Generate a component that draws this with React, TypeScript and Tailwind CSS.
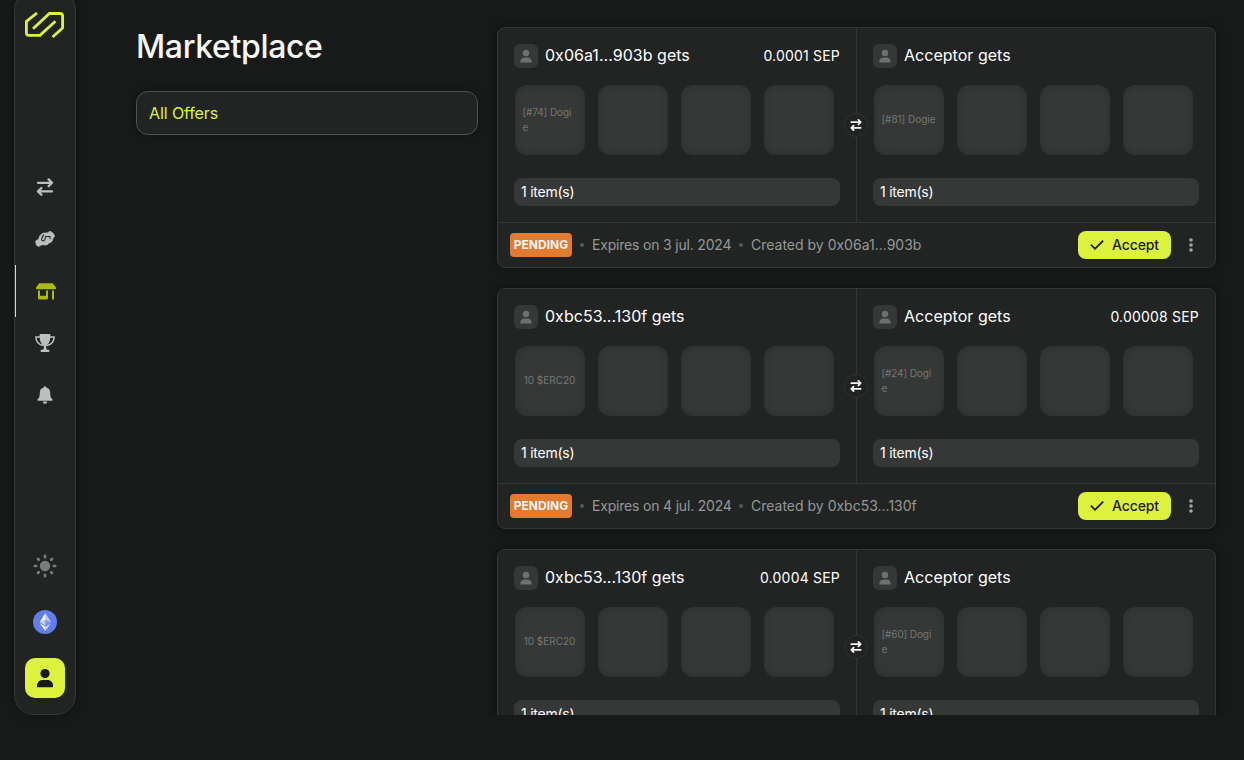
import React from "react";

type Side = { name: string; item: string; sep?: string };
type Offer = { from: Side; to: Side; expires: string; by: string };

const offers: Offer[] = [
  {
    from: { name: "0x06a1...903b gets", item: "[#74] Dogi\ne", sep: "0.0001 SEP" },
    to: { name: "Acceptor gets", item: "[#81] Dogie" },
    expires: "Expires on 3 jul. 2024",
    by: "Created by 0x06a1...903b",
  },
  {
    from: { name: "0xbc53...130f gets", item: "10 $ERC20" },
    to: { name: "Acceptor gets", item: "[#24] Dogi\ne", sep: "0.00008 SEP" },
    expires: "Expires on 4 jul. 2024",
    by: "Created by 0xbc53...130f",
  },
  {
    from: { name: "0xbc53...130f gets", item: "10 $ERC20", sep: "0.0004 SEP" },
    to: { name: "Acceptor gets", item: "[#60] Dogi\ne" },
    expires: "Expires on 4 jul. 2024",
    by: "Created by 0xbc53...130f",
  },
];

function Logo() {
  return (
    <svg width="40" height="26" viewBox="0 0 40 26" fill="none" stroke="#DDF23D" strokeWidth="2.8">
      <path d="M12 1 L1.4 9.5 V21 Q1.4 23.4 4 23.4 H15 L30.4 9.2" />
      <path d="M8 16.8 L24.4 1.5 H35 Q37.6 1.5 37.6 4 V16 L27.6 25" />
    </svg>
  );
}

function Swap({ size, color, weight = 2.3 }: { size: number; color: string; weight?: number }) {
  return (
    <svg width={size} height={size} viewBox="0 0 18 18" fill="none" stroke={color} strokeWidth={weight} strokeLinecap="round" strokeLinejoin="round">
      <path d="M2 4.8H15.8M12.6 1.4L16 4.8L12.6 8.2M16 13.4H2.2M5.4 10L2 13.4L5.4 16.8" />
    </svg>
  );
}

function Person({ size, color }: { size: number; color: string }) {
  return (
    <svg width={size} height={size} viewBox="0 0 20 20" fill={color}>
      <circle cx="10" cy="5.6" r="4.6" />
      <path d="M2 19.3V17.5C2 14 4.8 12 8 12H12C15.2 12 18 14 18 17.5V19.3Z" />
    </svg>
  );
}

function Handshake() {
  return (
    <svg width="20" height="16" viewBox="0 0 20 16">
      <path fill="#BDBFBE" stroke="#BDBFBE" strokeWidth="0.8" strokeLinejoin="round" d="M0.6 10.2L3.8 8C4.4 5.4 5.5 3.2 8 2.2C9.5 1.8 11 2.3 12.6 1.9L13.6 0.9L16 0.5L16.6 1.5L18.4 2.4L19.5 5.4L17.8 7.6C17.5 10.6 16 11.5 14 12C12.5 13.9 11 14.5 8.5 13.7L6.4 13.9L3.6 15.5L1.4 14Z" />
      <path fill="none" stroke="#222423" strokeWidth="1.1" strokeLinecap="round" d="M8.6 3.8C7.3 6 6.4 7.8 6.7 8.8C7.1 10.2 9 10.2 9.8 9L10.5 5.5H15V7.6" />
    </svg>
  );
}

function Store() {
  return (
    <svg width="20" height="17" viewBox="0 0 20 17" fill="#AABB14">
      <path d="M3.2 0.3H16.8L20 4.6V5.2Q20 6.3 18.9 6.3H1.1Q0 6.3 0 5.2V4.6Z" />
      <path d="M2 7.5H4V12.7H10V7.5H12V15Q12 16.5 10.5 16.5H3.5Q2 16.5 2 15ZM16 7.5H18V16.5H16Z" />
    </svg>
  );
}

function Trophy() {
  return (
    <svg width="20" height="18" viewBox="0 0 20 18">
      <path fill="#BDBFBE" d="M5.4 0H14.6Q15.4 0 15.4 0.9C15.4 6 14.6 9.2 11.2 11.6V14C11.2 15 11.7 15.6 12.6 15.8H13.4Q14.5 15.9 14.5 17Q14.5 18 13.4 18H6.6Q5.5 18 5.5 17Q5.5 15.9 6.6 15.8H7.4C8.3 15.6 8.8 15 8.8 14V11.6C5.4 9.2 4.6 6 4.6 0.9Q4.6 0 5.4 0Z" />
      <path fill="none" stroke="#BDBFBE" strokeWidth="1.5" strokeLinecap="round" d="M5 2.9H0.9C1 7.5 3.2 10.4 8 11.4M15 2.9H19.1C19 7.5 16.8 10.4 12 11.4" />
    </svg>
  );
}

function Bell() {
  return (
    <svg width="16" height="18" viewBox="0 0 16 18" fill="#BDBFBE">
      <path d="M8 0.2C8.8 0.2 9.2 0.7 9.2 1.5C11.8 2 13.2 4.2 13.2 6.8C13.2 10.4 13.8 12 15.6 13.6Q16 14.6 15 14.8H1Q0 14.6 0.4 13.6C2.2 12 2.8 10.4 2.8 6.8C2.8 4.2 4.2 2 6.8 1.5C6.8 0.7 7.2 0.2 8 0.2Z" />
      <path d="M5.8 15.4H10.2C10 17 9.2 17.8 8 17.8S6 17 5.8 15.4Z" />
    </svg>
  );
}

function Sun() {
  return (
    <svg width="24" height="24" viewBox="0 0 24 24">
      <circle cx="12" cy="12" r="5.2" fill="#7A7C7B" />
      <path d="M12 1.8V3.2M12 20.8V22.2M1.8 12H3.2M20.8 12H22.2M5 5L5.8 5.8M18.2 18.2L19 19M5 19L5.8 18.2M18.2 5.8L19 5" stroke="#7A7C7B" strokeWidth="2.7" strokeLinecap="round" />
    </svg>
  );
}

function Ethereum() {
  return (
    <svg width="24" height="24" viewBox="0 0 32 32">
      <circle cx="16" cy="16" r="16" fill="#627EEA" />
      <g fill="#fff">
        <path fillOpacity=".6" d="M16.5 4v8.87l7.5 3.35zM16.5 21.97V28L24 17.62z" />
        <path d="M16.5 4L9 16.22l7.5-3.35zM16.5 28v-6.03L9 17.62z" />
        <path fillOpacity=".2" d="M16.5 20.57l7.5-4.35-7.5-3.35z" />
        <path fillOpacity=".6" d="M9 16.22l7.5 4.35v-7.7z" />
      </g>
    </svg>
  );
}

function Slot({ label }: { label?: string }) {
  const twoLines = label?.includes("\n");
  return (
    <div className="flex h-[70px] w-[70px] items-center justify-center rounded-xl bg-[#363837] shadow-[inset_0_0_8px_rgba(0,0,0,0.18)]">
      {label && (
        <span
          className={
            twoLines
              ? "w-[55px] shrink-0 text-[10px] leading-[15px] tracking-[-0.1px] whitespace-pre text-[#737775]"
              : "mr-px mb-0.5 shrink-0 text-[10px] leading-[15px] tracking-[-0.02px] whitespace-pre text-[#737775]"
          }
        >
          {label}
        </span>
      )}
    </div>
  );
}

function OfferSide({ side }: { side: Side }) {
  return (
    <div className="h-full p-4">
      <div className="flex h-6 items-center">
        <div className="flex h-6 w-6 items-center justify-center rounded-md bg-[#363837]">
          <Person size={14} color="#6E716F" />
        </div>
        <span className="mb-0.5 ml-[7px] text-base tracking-[0.03px] whitespace-nowrap text-white">{side.name}</span>
        {side.sep && (
          <span className="ml-auto text-sm tracking-[0.2px] whitespace-nowrap text-white">{side.sep}</span>
        )}
      </div>
      <div className="mt-[17px] flex gap-[13px] pl-px">
        <Slot label={side.item} />
        <Slot />
        <Slot />
        <Slot />
      </div>
      <div className="mt-[23px] flex h-7 items-center rounded-lg bg-[#363837] pl-[7px] text-sm tracking-[-0.25px] text-white">1 item(s)</div>
    </div>
  );
}

function OfferCard({ offer }: { offer: Offer }) {
  return (
    <article className="h-[241px] shrink-0 rounded-lg border border-[#353736] bg-[#222423] shadow-[0_0_10px_rgba(0,0,0,0.4)]">
      <div className="relative grid h-[195px] grid-cols-[358px_359px] border-b border-[#353736]">
        <OfferSide side={offer.from} />
        <div className="border-l border-[#353736]">
          <OfferSide side={offer.to} />
        </div>
        <div className="absolute top-[85px] left-[346px] flex h-6 w-6 items-center justify-center rounded-full border border-[#303231] bg-[#212322]">
          <Swap size={12} color="#F6F6F6" weight={2.6} />
        </div>
      </div>
      <div className="flex h-11 items-center pl-3 text-sm whitespace-nowrap text-[#959896]">
        <span className="flex h-6 w-[62px] items-center justify-center rounded bg-[#E07B30] text-xs font-bold text-[#F6F6F6]">PENDING</span>
        <span className="ml-2 h-1 w-1 rounded-full bg-[#555756]" />
        <span className="ml-2 w-[139px] tracking-[-0.19px]">{offer.expires}</span>
        <span className="ml-2 h-1 w-1 rounded-full bg-[#555756]" />
        <span className="ml-2">{offer.by}</span>
        <button className="ml-auto flex h-7 w-[93px] items-center rounded-lg bg-[#DDF23D] pl-3 font-medium tracking-[-0.1px] text-[#181A19]">
          <svg width="14" height="12" viewBox="0 0 14 12" fill="none" stroke="#181A19" strokeWidth="1.8">
            <path d="M0.9 5.7L5 9.8L13.2 1.6" />
          </svg>
          <span className="ml-2">Accept</span>
        </button>
        <svg className="mr-[22px] ml-[18px]" width="4" height="14" viewBox="0 0 4 14" fill="#A3A5A4">
          <circle cx="2" cy="2" r="1.8" />
          <circle cx="2" cy="7" r="1.8" />
          <circle cx="2" cy="12" r="1.8" />
        </svg>
      </div>
    </article>
  );
}

export default function App() {
  return (
    <div className="flex h-[760px] w-[1244px] overflow-hidden bg-[#181A19] font-['Inter',sans-serif] text-[#F6F6F6]">
      <aside className="-mt-2.5 ml-[14px] flex h-[725px] w-[62px] shrink-0 flex-col items-center rounded-[20px] border border-[#353736] bg-[#222423] pt-[21px] shadow-[0_0_10px_rgba(0,0,0,0.35)]">
        <Logo />
        <nav className="mt-[123px] flex w-full flex-col">
          <a className="flex h-[52px] items-center justify-center"><Swap size={18} color="#BDBFBE" /></a>
          <a className="flex h-[52px] items-center justify-center"><Handshake /></a>
          <a className="flex h-[52px] items-center justify-center border-l border-[#DDF23D]"><Store /></a>
          <a className="flex h-[52px] items-center justify-center"><Trophy /></a>
          <a className="flex h-[52px] items-center justify-center"><Bell /></a>
        </nav>
        <div className="mt-auto mb-4 flex flex-col items-center">
          <Sun />
          <div className="mt-8"><Ethereum /></div>
          <div className="mt-6 flex h-10 w-10 items-center justify-center rounded-[10px] bg-[#DDF23D]">
            <Person size={20} color="#181A19" />
          </div>
        </div>
      </aside>
      <section className="ml-[60px] w-[342px] shrink-0 pt-[27px]">
        <h1 className="text-[32px] leading-10 font-medium tracking-[-0.35px]">Marketplace</h1>
        <div className="mt-6 flex h-11 items-center rounded-xl border border-[#505251] bg-[#222423] pl-3 text-base text-[#DDF23D] shadow-[0_0_8px_rgba(0,0,0,0.3)]">
          <span className="tracking-[-0.1px]">All Offers</span>
        </div>
      </section>
      <main className="flex h-[715px] w-[759px] flex-col gap-5 overflow-hidden pt-[27px] pr-[21px] pl-[19px]">
        {offers.map((o, i) => (
          <OfferCard key={i} offer={o} />
        ))}
      </main>
    </div>
  );
}
